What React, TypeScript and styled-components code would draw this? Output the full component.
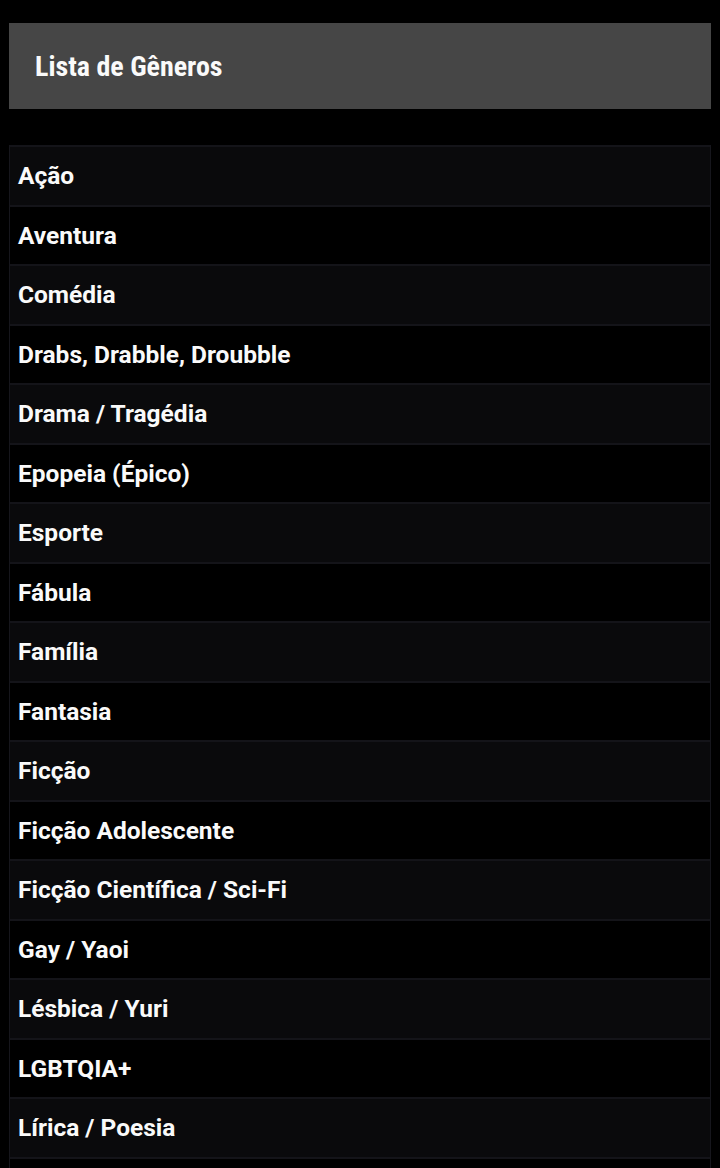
import styled, { createGlobalStyle } from 'styled-components';

const GlobalStyle = createGlobalStyle`
    html, body {
        margin: 0;
        padding: 0;
        background: #000;
    }
    body {
        font-family: Roboto, 'Liberation Sans', sans-serif;
        color: #fff;
    }
`;

const Page = styled.div`
    width: 720px;
    height: 1168px;
    box-sizing: border-box;
    padding: 23px 9px 0 9px;
    background: #000;
    overflow: hidden;
`;

const Header = styled.div`
    height: 86px;
    background: #464646;
    display: flex;
    align-items: center;
    padding-left: 26px;
    margin-bottom: 36px;
`;

const Title = styled.h1`
    margin: 0;
    font-family: 'Roboto Condensed', Roboto, sans-serif;
    font-weight: 700;
    font-size: 28px;
    color: #fafafa;
    white-space: nowrap;
`;

const List = styled.ul`
    list-style: none;
    margin: 0;
    padding: 0;
    border-left: 1px solid #16161c;
    border-right: 1px solid #16161c;
`;

const Row = styled.li<{ $odd: boolean }>`
    height: 59.5px;
    box-sizing: border-box;
    display: flex;
    align-items: center;
    padding-left: 8px;
    border-top: 2px solid #141419;
    background: ${(p) => (p.$odd ? '#0a0a0c' : '#000')};
    font-size: 24.5px;
    font-weight: 700;
    color: #fafafa;
`;

const genres = [
    'Ação',
    'Aventura',
    'Comédia',
    'Drabs, Drabble, Droubble',
    'Drama / Tragédia',
    'Epopeia (Épico)',
    'Esporte',
    'Fábula',
    'Família',
    'Fantasia',
    'Ficção',
    'Ficção Adolescente',
    'Ficção Científica / Sci-Fi',
    'Gay / Yaoi',
    'Lésbica / Yuri',
    'LGBTQIA+',
    'Lírica / Poesia',
    '',
];

const App = () => (
    <>
        <GlobalStyle />
        <Page>
            <Header>
                <Title>Lista de Gêneros</Title>
            </Header>
            <List>
                {genres.map((g, i) => (
                    <Row key={i} $odd={i % 2 === 0}>
                        {g}
                    </Row>
                ))}
            </List>
        </Page>
    </>
);

export default App;
